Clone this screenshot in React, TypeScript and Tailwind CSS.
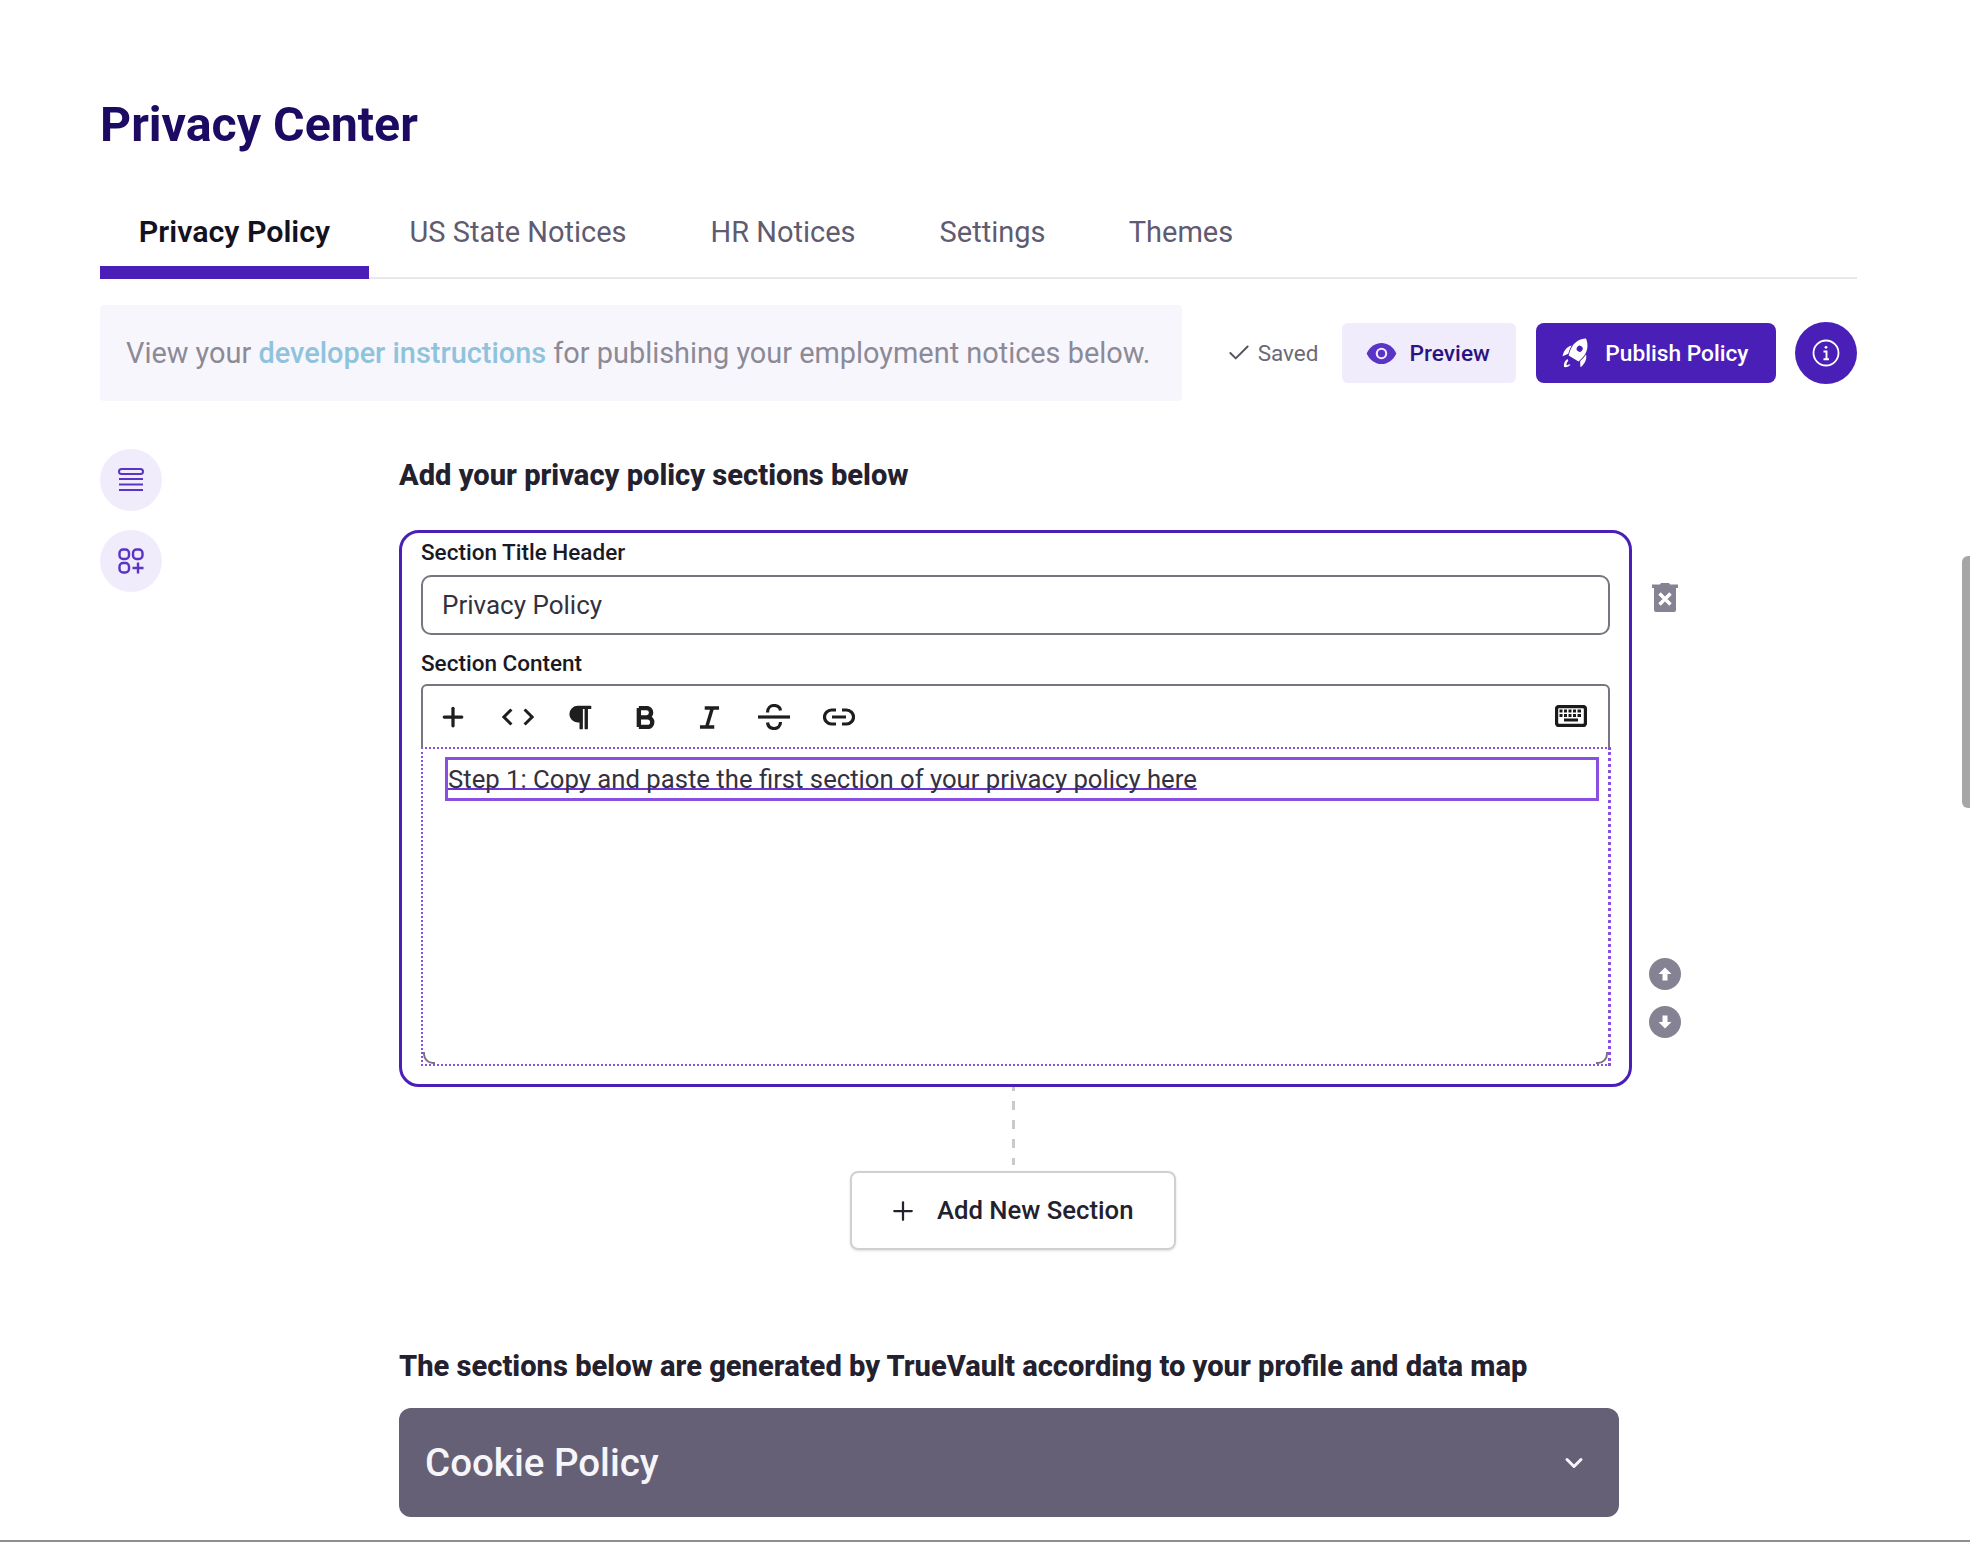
import React from "react";
import { FaParagraph } from "react-icons/fa";
import { Plus, Check, ChevronDown } from "lucide-react";

const Tab = ({ label, active, cls }: { label: string; active?: boolean; cls: string }) => (
  <div className={`h-[79px] flex items-center justify-center leading-none whitespace-nowrap ${cls} ${active ? "text-[30.400px] font-semibold text-[#14121f] border-b-[13px] border-[#4a1fb8] pb-[2px]" : "text-[29px] pb-[15px] text-[#5f5b70]"}`}>
    {label}
  </div>
);

const Tool = ({ children, cls }: { children: React.ReactNode; cls: string }) => (
  <div className={`flex items-center justify-center w-[36px] h-[36px] text-[#1e1e1e] ${cls}`}>{children}</div>
);

export default function App() {
  return (
    <div className="relative w-[1970px] h-[1542px] overflow-hidden bg-white pl-[100px] font-['Roboto',sans-serif]">
      <h1 className="pt-[94px] text-[48.300px] leading-[62px] font-bold text-[#1c0a63]">Privacy Center</h1>

      <div className="mt-[44px] w-[1757px] flex border-b-2 border-[#e8e8ec] h-[79px]">
        <Tab label="Privacy Policy" active cls="w-[269px]" />
        <Tab label="US State Notices" cls="ml-[41px] w-[216px]" />
        <Tab label="HR Notices" cls="ml-[85px] w-[144px]" />
        <Tab label="Settings" cls="ml-[85px] w-[105px]" />
        <Tab label="Themes" cls="ml-[84px] w-[104px]" />
      </div>

      <div className="mt-[26px] w-[1757px] flex items-center">
        <div className="w-[1083px] h-[96px] rounded-[4px] bg-[#f8f6fd] flex items-center pl-[26px] pt-[2px] text-[28.900px] text-[#8b8a96] whitespace-nowrap">
          View your&nbsp;<span className="text-[#8fc3dc] font-medium">developer instructions</span>&nbsp;for publishing your employment notices below.
        </div>
        <Check className="ml-[44px] w-[26px] h-[26px] text-[#55535f]" strokeWidth={1.8} />
        <span className="ml-[6px] w-[65px] pt-[2px] text-[22.500px] text-[#6b6976]">Saved</span>
        <button className="ml-[19px] w-[175px] h-[60px] rounded-[6px] bg-[#f1ecfb] flex items-center pl-[24px] text-[22.700px] font-medium text-[#2a1480]">
          <svg viewBox="0 0 32 24" className="w-[31px] h-[23px]">
            <path d="M0.5 12C4 4.5 10 1 16 1s12 3.5 15.5 11C28 19.500 22 23 16 23S4 19.500 0.500 12z" fill="#5a34c4" />
            <circle cx="16" cy="12" r="6" fill="#f1ecfb" />
            <circle cx="16" cy="12" r="3.800" fill="#5a34c4" />
          </svg>
          <span className="ml-[13px] pt-[2px]">Preview</span>
        </button>
        <button className="ml-[20px] w-[240px] h-[60px] rounded-[8px] bg-[#4a1fb8] flex items-center pl-[26px] text-[22.700px] font-medium text-white">
          <svg viewBox="0 0 30 30" className="w-[30px] h-[30px]">
            <g transform="rotate(32 15 15)" fill="#fff">
              <path fillRule="evenodd" d="M15 -2c5.500 4 7.500 9 7.500 14 0 3-.7 6-1.700 9.500H9.200c-1-3.500-1.700-6.500-1.700-9.500C7.500 7 9.500 2 15-2zm0 9a3 3 0 100 6 3 3 0 000-6z" />
              <path d="M6.500 11.500c.1 3 .6 6 1.500 8.800l-3.500 5C2.500 21 3 15 6.500 11.500zM23.500 11.500c3.500 3.500 4 9.500 2 13.800l-3.500-5c.9-2.800 1.400-5.800 1.500-8.800z" />
            </g>
            <path d="M5.500 21c-2.800 1.500-4 4.500-3.500 8 2.500.5 5-.3 6.500-2.200l-2-.6-.3 1-1.700-.2c0-1.700.5-3 1.800-4.300z" fill="#fff" />
          </svg>
          <span className="ml-[13px] pt-[2px]">Publish Policy</span>
        </button>
        <button className="ml-[19px] w-[62px] h-[62px] rounded-full bg-[#4a1fb8] flex items-center justify-center">
          <svg viewBox="0 0 28 28" className="w-[28px] h-[28px]" fill="none" stroke="#fff" strokeWidth="1.800">
            <circle cx="14" cy="14" r="12.500" />
            <path d="M11.500 12.500H14.500V20M11.500 20.200H17" strokeWidth="1.900" />
            <circle cx="14" cy="8.300" r="1.400" fill="#fff" stroke="none" />
          </svg>
        </button>
      </div>

      <div className="flex mt-[48px]">
        <div className="w-[299px] flex flex-col gap-[19px]">
          <div className="w-[62px] h-[62px] rounded-full bg-[#f1ecfb] flex items-center justify-center">
            <svg viewBox="0 0 26 24" className="w-[26px] h-[24px]" fill="none" stroke="#5a34c4" strokeWidth="2">
              <rect x="1" y="1" width="24" height="5" rx="2.500" />
              <path d="M1 11h24M1 16.500h24M1 22h24" />
            </svg>
          </div>
          <div className="w-[62px] h-[62px] rounded-full bg-[#f1ecfb] flex items-center justify-center">
            <svg viewBox="0 0 26 26" className="w-[26px] h-[26px]" fill="none" stroke="#5a34c4" strokeWidth="2.400">
              <rect x="1.500" y="1.500" width="9.500" height="9.500" rx="3.500" />
              <rect x="15" y="1.500" width="9.500" height="9.500" rx="3.500" />
              <rect x="1.500" y="15" width="9.500" height="9.500" rx="3.500" />
              <path d="M20 14.500v11M14.500 20h11" />
            </svg>
          </div>
        </div>

        <div className="w-[1300px]">
          <h2 className="text-[29.100px] leading-[36px] font-extrabold text-[#24212f] pt-[8px]">Add your privacy policy sections below</h2>

          <div className="mt-[37px] flex">
            <div className="w-[1233px] h-[557px] rounded-[20px] border-[3px] border-[#4a1fb8] px-[19px] pt-[5px]">
              <div className="text-[22.500px] leading-[28px] font-medium text-[#1a1a24]">Section Title Header</div>
              <div className="mt-[9px] h-[60px] rounded-[10px] border-2 border-[#77757f] flex items-center pl-[19px] text-[26px] text-[#33313d]">Privacy Policy</div>
              <div className="mt-[14px] text-[22.500px] leading-[28px] font-medium text-[#1a1a24]">Section Content</div>
              <div className="mt-[7px] h-[382px] relative rounded-[6px] border-2 border-[#77757f]">
                <div className="h-[62px] flex items-center relative">
                  <Tool cls="ml-[12px]"><Plus className="w-[30px] h-[30px]" strokeWidth={2.600} /></Tool>
                  <Tool cls="ml-[29px]">
                    <svg viewBox="0 0 34 20" className="w-[32px] h-[20px]" fill="none" stroke="currentColor" strokeWidth="3.200">
                      <path d="M10 2L2 10l8 8M24 2l8 8-8 8" />
                    </svg>
                  </Tool>
                  <Tool cls="ml-[25px]"><FaParagraph className="w-[25px] h-[27px]" /></Tool>
                  <Tool cls="ml-[30px]">
                    <svg viewBox="0 0 20 24" className="w-[19px] h-[23px]" fill="none" stroke="currentColor" strokeWidth="4.600">
                      <path d="M3 2v20M3 2h8a4.800 4.800 0 010 9.800H3M3 11.800h9a5 5 0 010 10.200H3" />
                    </svg>
                  </Tool>
                  <Tool cls="ml-[28px]">
                    <svg viewBox="0 0 22 24" className="w-[21px] h-[23px]" fill="none" stroke="currentColor" strokeWidth="3.600">
                      <path d="M6 2h15M1 22h15M14 2L8 22" />
                    </svg>
                  </Tool>
                  <Tool cls="ml-[29px]">
                    <svg viewBox="0 0 32 26" className="w-[32px] h-[26px]" fill="none" stroke="currentColor" strokeWidth="3.200">
                      <path d="M0 13h32" />
                      <path d="M9.500 8.500C9.500 4 12.500 1.500 16 1.500s6 1.700 6.500 5M9.500 18.500c.5 3.600 3 6 6.500 6s6.500-2.500 6.500-6.500" />
                    </svg>
                  </Tool>
                  <Tool cls="ml-[29px]">
                    <svg viewBox="0 0 32 18" className="w-[32px] h-[18px]" fill="none" stroke="currentColor" strokeWidth="3.200">
                      <path d="M13 2H8.500a7 7 0 000 14H13M19 2h4.500a7 7 0 010 14H19M9 9h14" />
                    </svg>
                  </Tool>
                  <svg viewBox="0 0 32 22" className="absolute right-[21px] top-[19px] w-[32px] h-[22px]">
                    <rect x="1.500" y="1.500" width="29" height="19" rx="2.500" fill="none" stroke="#1a1a1a" strokeWidth="3.400" />
                    <path d="M4.500 4.500h3v3h-3zM9 4.500h3v3H9zM13.500 4.500h3v3h-3zM18 4.500h3v3h-3zM22.500 4.500h3.500v3h-3.500zM4.500 9h3v3h-3zM9 9h3v3H9zM13.500 9h3v3h-3zM18 9h3v3h-3zM22.500 9h3.500v3h-3.500zM9 13.500h14v3H9z" fill="#1a1a1a" />
                  </svg>
                </div>
                <div className="absolute -left-[2px] -right-[3px] top-[61px] -bottom-[2px] bg-white border-2 border-r-[3px] border-dotted border-[#8a4fe0] pl-[22px] pr-[9px] pt-[8px]">
                  <div className="h-[44px] border-[3px] border-[#8a4fe0] flex items-center text-[25.700px] text-[#33313d] underline decoration-[#6a35d0] decoration-2 underline-offset-[0px] [text-decoration-skip-ink:none] whitespace-nowrap">
                    Step 1: Copy and paste the first section of your privacy policy here
                  </div>
                  <div className="absolute right-0 bottom-0 w-[12px] h-[12px] rounded-br-[10px] border-r-2 border-b-2 border-[#77757f]" />
                  <div className="absolute left-0 bottom-0 w-[12px] h-[12px] rounded-bl-[10px] border-l-2 border-b-2 border-[#77757f]" />
                </div>
              </div>
            </div>

            <div className="ml-[17px] w-[32px] h-[557px] flex flex-col items-center text-[#858294]">
              <svg viewBox="0 0 26 29" className="mt-[53px] w-[26px] h-[29px] shrink-0">
                <path d="M9 0h8l1 1.500h8V5H0V1.500h8z" fill="#858294" />
                <path d="M2 5h22v22a2 2 0 01-2 2H4a2 2 0 01-2-2z" fill="#858294" />
                <path d="M7.500 10.500l11 11M18.500 10.500l-11 11" stroke="#fff" strokeWidth="3.400" fill="none" />
              </svg>
              <svg viewBox="0 0 32 32" className="mt-[346px] w-[32px] h-[32px] shrink-0">
                <circle cx="16" cy="16" r="16" fill="#858294" />
                <path d="M16 9.500L9.500 16H13.500V22.500H18.500V16H22.500z" fill="#fff" />
              </svg>
              <svg viewBox="0 0 32 32" className="mt-[16px] w-[32px] h-[32px] shrink-0">
                <circle cx="16" cy="16" r="16" fill="#858294" />
                <path d="M16 22.500L9.500 16H13.500V9.500H18.500V16H22.500z" fill="#fff" />
              </svg>
            </div>
          </div>

          <div className="ml-[613px] h-[78px] w-[3px] bg-[repeating-linear-gradient(to_bottom,#c9c9ce_0_4px,transparent_4px_14px,#c9c9ce_14px_19px)]" />
          <button className="ml-[451px] mt-[6px] w-[326px] h-[79px] rounded-[8px] border-2 border-[#cfcfd4] shadow-sm flex items-center pl-[36px] text-[25.700px] font-medium text-[#24212f]">
            <Plus className="w-[30px] h-[30px]" strokeWidth={1.800} />
            <span className="ml-[19px]">Add New Section</span>
          </button>

          <h2 className="mt-[98px] text-[29.100px] leading-[36px] font-extrabold text-[#24212f]">The sections below are generated by TrueVault according to your profile and data map</h2>
          <div className="mt-[24px] w-[1220px] h-[109px] rounded-[12px] bg-[#656076] flex items-center justify-between pl-[26px] pr-[31px] text-[38.500px] font-medium text-[#f6f5fa]">
            Cookie Policy
            <ChevronDown className="w-[28px] h-[28px]" strokeWidth={2.600} />
          </div>
        </div>
      </div>

      <div className="absolute left-0 right-0 bottom-0 h-[2px] bg-[#8e8e8e]" />
      <div className="absolute right-0 top-[556px] w-[8px] h-[252px] rounded-l-[6px] bg-[#a6a6a6]" />
    </div>
  );
}
